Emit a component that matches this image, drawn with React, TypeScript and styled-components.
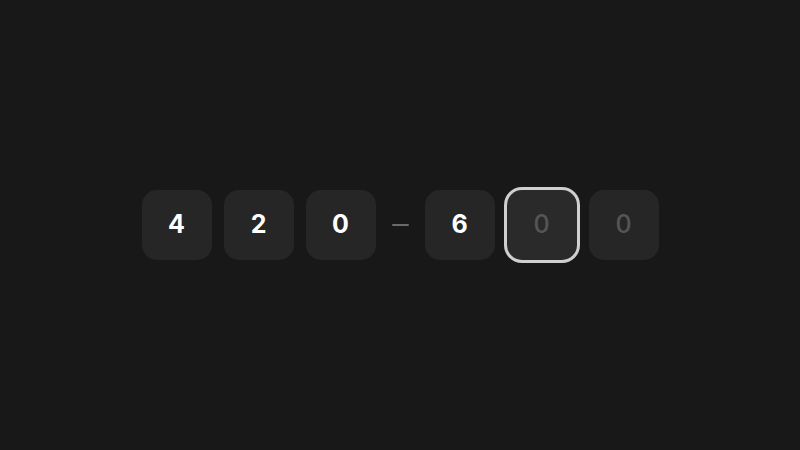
import React from "react";
import styled, { createGlobalStyle } from "styled-components";

const GlobalStyle = createGlobalStyle`
  html, body {
    margin: 0;
    padding: 0;
    background: #181818;
  }
`;

const Page = styled.div`
  width: 800px;
  height: 450px;
  display: flex;
  align-items: center;
  justify-content: center;
  background: #181818;
  font-family: Inter, "Noto Sans", sans-serif;
`;

const OtpRow = styled.div`
  display: flex;
  align-items: center;
  gap: 16px;
`;

const SlotGroup = styled.div`
  display: flex;
  align-items: center;
  gap: 12px;
`;

const Slot = styled.div<{ $active?: boolean; $filled?: boolean }>`
  width: 70px;
  height: 70px;
  box-sizing: border-box;
  border-radius: 15px;
  background: ${(p) => (p.$active ? "#2a2a2a" : "#262626")};
  box-shadow: ${(p) => (p.$active ? "0 0 0 3px #cfcfcf" : "none")};
  display: flex;
  align-items: center;
  justify-content: center;
  color: ${(p) => (p.$filled ? "#ffffff" : "#555555")};
  font-size: 25px;
  font-weight: ${(p) => (p.$filled ? 700 : 500)};
  line-height: 1;
  padding-bottom: 2px;
`;

const Separator = styled.div`
  width: 17px;
  height: 2px;
  border-radius: 1px;
  background: #6a6a6a;
`;

type SlotData = { char: string; filled: boolean; active?: boolean };

const first: SlotData[] = [
  { char: "4", filled: true },
  { char: "2", filled: true },
  { char: "0", filled: true },
];

const second: SlotData[] = [
  { char: "6", filled: true },
  { char: "0", filled: false, active: true },
  { char: "0", filled: false },
];

const renderGroup = (slots: SlotData[]) => (
  <SlotGroup>
    {slots.map((s, i) => (
      <Slot key={i} $filled={s.filled} $active={s.active}>
        {s.char}
      </Slot>
    ))}
  </SlotGroup>
);

export default function App() {
  return (
    <>
      <GlobalStyle />
      <Page>
        <OtpRow>
          {renderGroup(first)}
          <Separator />
          {renderGroup(second)}
        </OtpRow>
      </Page>
    </>
  );
}
